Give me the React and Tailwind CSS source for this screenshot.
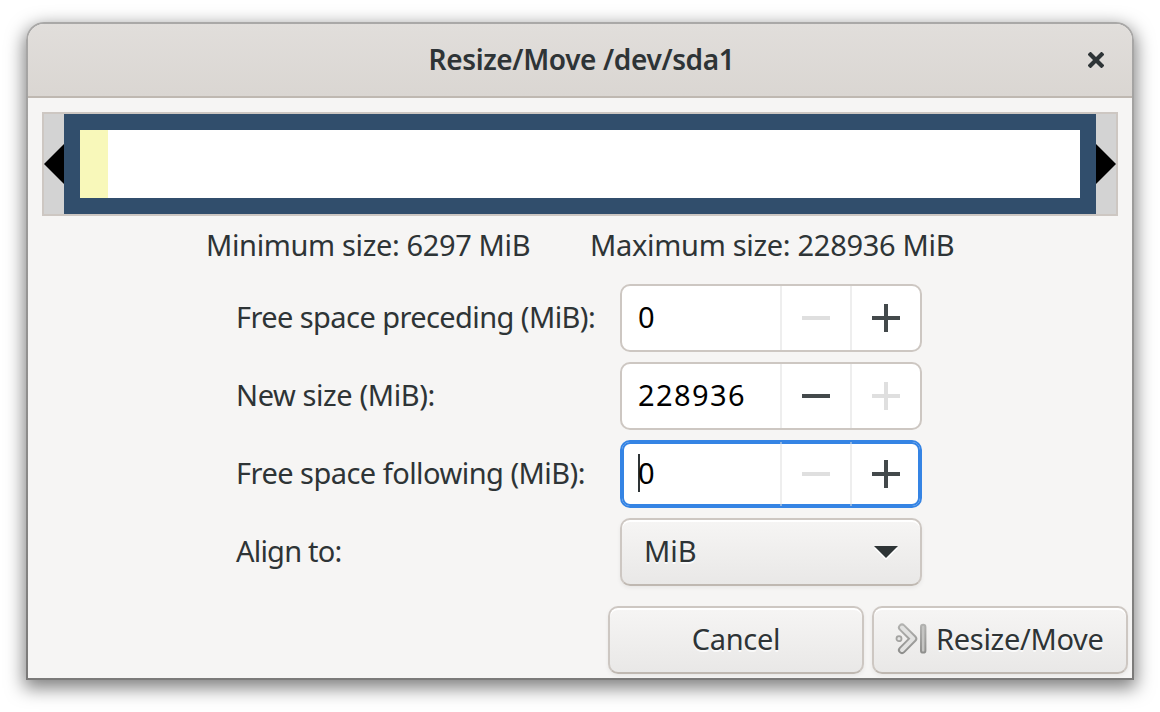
import React from "react";

function Glyph({ plus, dim }) {
  return (
    <svg width="28" height="28" viewBox="0 0 28 28" fill={dim ? "#dfdfdf" : "#43494b"} shapeRendering="crispEdges">
      <rect x="0" y="12" width="28" height="4" />
      {plus && <rect x="12" y="0" width="4" height="28" />}
    </svg>
  );
}

function Spin({ value, noMinus, noPlus, focused }) {
  return (
    <div
      className={
        "flex h-[68px] w-[302px] rounded-[10px] border-2 bg-white " +
        (focused ? "border-[#3584e4] shadow-[inset_0_0_0_2px_#3584e4]" : "border-[#cdc7c2]")
      }
    >
      <div className="flex w-[158px] items-center pl-4 text-[29px] leading-10 tracking-[1.4px] text-black">
        {focused && <span className="-mt-0.5 -mr-0.5 h-[38px] w-0.5 bg-[#2e3436]" />}
        <span className="-mt-0.5">{value}</span>
      </div>
      <div className="flex w-[70px] items-center justify-center border-l-2 border-[#dddddd]/50">
        <Glyph dim={noMinus} />
      </div>
      <div className="flex w-[70px] items-center justify-center border-l-2 border-[#dddddd]/50">
        <Glyph plus dim={noPlus} />
      </div>
    </div>
  );
}

function Row({ label, children }) {
  return (
    <div className="flex h-[68px] items-center">
      <div className="-mt-0.5 w-[384px] whitespace-nowrap">{label}</div>
      {children}
    </div>
  );
}

const button =
  "flex h-[68px] items-center rounded-[10px] border-2 border-[#cdc7c2] border-b-[#bfb8b1] bg-linear-to-b from-[#f6f5f4] to-[#e9e8e7] shadow-[inset_0_2px_0_#fff,0_2px_4px_rgba(0,0,0,0.06)] [text-shadow:0_2px_0_rgba(255,255,255,0.77)]";

export default function App() {
  return (
    <div className="flex h-[712px] w-[1160px] bg-white pt-[22px] pl-[26px] font-['Noto_Sans',sans-serif] text-[29px] leading-10 text-[#2e3436]">
      <div className="h-[658px] w-[1108px] rounded-t-[18px] bg-linear-to-b from-[#a9a8a7] via-[#929190] to-[#7b7a79] p-0.5 shadow-[0_6px_18px_2px_rgba(0,0,0,0.5)]">
        <div className="flex h-[654px] flex-col overflow-hidden rounded-t-[16px] bg-[#f6f5f4]">
          <header className="relative flex h-[74px] shrink-0 items-center justify-center border-b-2 border-[#bfb8b1] bg-linear-to-b from-[#e1dedb] to-[#dad6d2]">
            <h1 className="-mt-0.5 ml-[3px] text-[28px] font-semibold tracking-[-0.37px] whitespace-nowrap">Resize/Move /dev/sda1</h1>
            <svg className="absolute top-7 right-7" width="16" height="16" viewBox="0 0 16 16" stroke="#2e3436" strokeWidth="4.2" strokeLinecap="square">
              <path d="M2.5 2.5 13.5 13.5M13.5 2.5 2.5 13.5" />
            </svg>
          </header>
          <div className="mx-3.5 mt-3.5 flex h-[104px] shrink-0 border-2 border-[#cdc7c2] bg-[#d3d3d3]">
            <svg className="mt-[30px] w-5" height="40" viewBox="0 0 20 40">
              <path d="M20 0 0 20 20 40z" />
            </svg>
            <div className="flex h-[100px] w-[1032px] border-[16px] border-[#314e6c] bg-white">
              <div className="w-7 bg-[#f8f8ba]" />
            </div>
            <svg className="mt-[30px] w-5" height="40" viewBox="0 0 20 40">
              <path d="M0 0 20 20 0 40z" />
            </svg>
          </div>
          <div className="mt-[9px] flex h-10 shrink-0 pl-[178px] whitespace-nowrap">
            <div className="w-[384px]"><span className="tracking-[-0.36px]">Minimum size: 6297 MiB</span></div>
            <div><span className="tracking-[-0.3px]">Maximum size: 228936 MiB</span></div>
          </div>
          <div className="mt-[19px] flex shrink-0 flex-col gap-2.5 pl-[208px]">
            <Row label={<span className="tracking-[-0.58px]">Free space preceding (MiB):</span>}><Spin value="0" noMinus /></Row>
            <Row label={<span className="tracking-[-0.4px]">New size (MiB):</span>}><Spin value="228936" noPlus /></Row>
            <Row label={<span className="tracking-[-0.53px]">Free space following (MiB):</span>}><Spin value="0" noMinus focused /></Row>
            <Row label={<span className="tracking-[-0.8px]">Align to:</span>}>
              <div className={button + " w-[302px] justify-between pr-[22px] pl-[22px]"}>
                <span className="-mt-0.5">MiB</span>
                <svg className="mt-0.5" width="24" height="14" viewBox="0 0 24 14">
                  <path d="M0 2h24L12 14z" fill="#fff" />
                  <path d="M0 0h24L12 12z" fill="#2e3436" />
                </svg>
              </div>
            </Row>
          </div>
          <div className="mt-5 flex shrink-0 justify-end gap-2 pr-1">
            <button className={button + " w-[256px] justify-center pb-0.5 tracking-[-0.3px]"}>Cancel</button>
            <button className={button + " w-[256px] pb-0.5 pl-[21px]"}>
              <svg className="mr-[9px] shrink-0" width="32" height="32" viewBox="0 0 32 32" fill="none">
                <defs>
                  <linearGradient id="edge" x1="0" y1="0" x2="0" y2="32" gradientUnits="userSpaceOnUse">
                    <stop stopColor="#b4b4b2" />
                    <stop offset="1" stopColor="#8c8c8a" />
                  </linearGradient>
                </defs>
                <path d="M7 4.5 18.2 15.7 7 27" stroke="url(#edge)" strokeWidth="8" strokeLinecap="round" strokeLinejoin="round" />
                <path d="M7 4.5 18.2 15.7 7 27" stroke="#e2e2e1" strokeWidth="4" strokeLinecap="round" strokeLinejoin="round" />
                <circle cx="4" cy="15.7" r="2.5" stroke="#a3a3a1" strokeWidth="1.8" fill="#e4e4e3" />
                <rect x="26" y="1.8" width="4.4" height="27.8" rx="2.2" stroke="url(#edge)" strokeWidth="2" fill="#c4c4c2" />
              </svg>
              <span className="tracking-[-0.3px] whitespace-nowrap">Resize/Move</span>
            </button>
          </div>
        </div>
      </div>
    </div>
  );
}
